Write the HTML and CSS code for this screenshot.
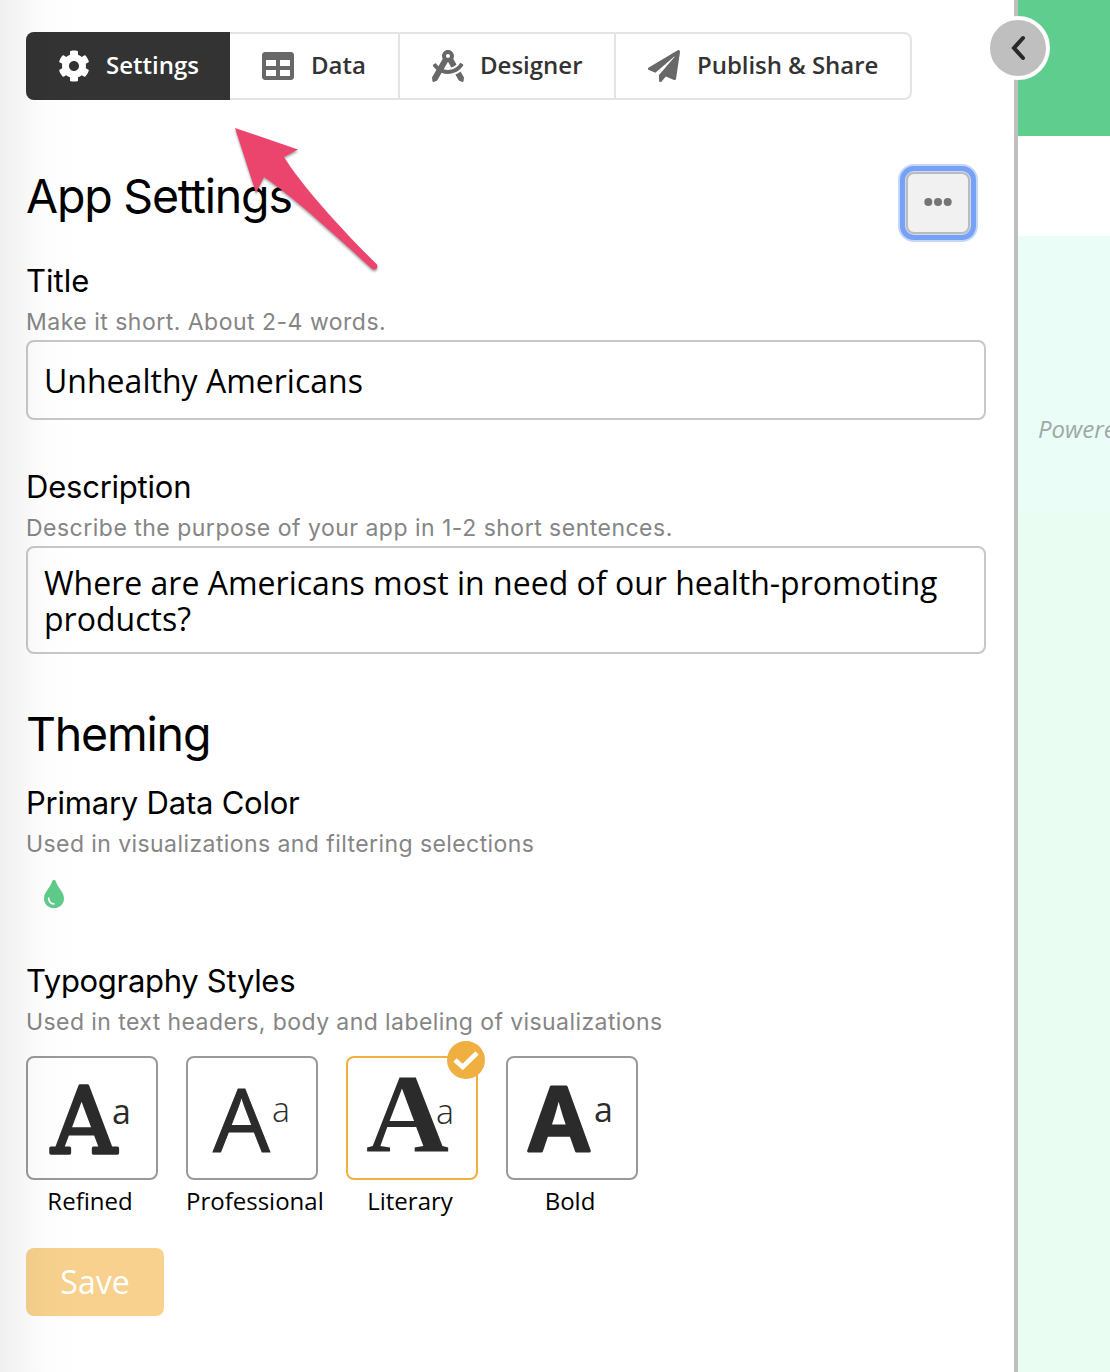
FILE: index.html
```html
<!DOCTYPE html>
<html lang="en">
<head>
<meta charset="utf-8">
<title>App Settings</title>
<link rel="stylesheet" href="styles.css">
</head>
<body>
<div class="app">
  <main class="panel">
    <nav class="tabs">
      <a class="tab tab-settings active">
        <svg class="icon" width="32" height="32" viewBox="0 0 512 512"><path fill="currentColor" d="M487.400 315.700l-42.600-24.600c4.300-23.200 4.300-47 0-70.200l42.600-24.600c4.900-2.800 7.100-8.600 5.500-14-11.100-35.600-30-67.800-54.700-94.600-3.800-4.100-10-5.100-14.800-2.300L380.800 110c-17.900-15.400-38.500-27.300-60.800-35.100V25.800c0-5.600-3.900-10.500-9.400-11.700-36.700-8.200-74.300-7.800-109.200 0-5.500 1.200-9.400 6.100-9.400 11.700V75c-22.200 7.900-42.800 19.800-60.800 35.100L88.700 85.500c-4.900-2.800-11-1.900-14.800 2.300-24.700 26.700-43.600 58.900-54.700 94.600-1.700 5.400.6 11.200 5.500 14L67.300 221c-4.300 23.200-4.300 47 0 70.200l-42.600 24.600c-4.900 2.800-7.100 8.600-5.500 14 11.100 35.600 30 67.800 54.700 94.600 3.800 4.100 10 5.100 14.800 2.300l42.600-24.600c17.900 15.400 38.500 27.300 60.800 35.100v49.200c0 5.600 3.900 10.500 9.400 11.700 36.700 8.200 74.300 7.800 109.200 0 5.500-1.200 9.400-6.100 9.400-11.700v-49.200c22.200-7.900 42.800-19.800 60.800-35.100l42.600 24.600c4.900 2.800 11 1.900 14.800-2.300 24.700-26.700 43.600-58.900 54.700-94.600 1.500-5.500-.7-11.300-5.600-14.100zM256 336c-44.100 0-80-35.900-80-80s35.900-80 80-80 80 35.900 80 80-35.900 80-80 80z"/></svg>
        <span>Settings</span>
      </a>
      <a class="tab tab-data">
        <svg class="icon" width="32" height="32" viewBox="0 0 512 512"><path fill="currentColor" d="M464 32H48C21.500 32 0 53.500 0 80v352c0 26.500 21.500 48 48 48h416c26.500 0 48-21.500 48-48V80c0-26.500-21.500-48-48-48zM224 416H64v-96h160v96zm0-160H64v-96h160v96zm224 160H288v-96h160v96zm0-160H288v-96h160v96z"/></svg>
        <span>Data</span>
      </a>
      <a class="tab tab-designer">
        <svg class="icon" width="32" height="32" viewBox="0 0 512 512"><path fill="currentColor" d="M457.010 344.420c-25.050 20.330-52.630 37.180-82.540 49.050l54.380 94.190 53.950 23.040c9.810 4.190 20.890-2.210 22.170-12.800l7.020-58.250-54.980-95.230zm42.490-94.560c4.860-7.670 1.890-17.990-6.050-22.390l-28.070-15.570c-7.480-4.150-16.610-1.460-21.260 5.720C403.010 281.150 332.250 320 256 320c-23.930 0-47.230-4.250-69.410-11.530l67.360-116.680c.7.020 1.340.21 2.040.21s1.350-.19 2.040-.21l51.090 88.500c31.230-8.960 59.560-25.750 82.610-48.920l-51.790-89.710C347.390 128.030 352 112.630 352 96c0-53.020-42.980-96-96-96s-96 42.980-96 96c0 16.630 4.610 32.030 12.050 45.660l-68.300 118.310c-12.550-11.610-23.960-24.590-33.680-39-4.790-7.100-13.970-9.620-21.380-5.330l-27.750 16.070c-7.850 4.540-10.630 14.900-5.640 22.470 15.570 23.640 34.690 44.210 55.980 62.020L0 439.660l7.020 58.250c1.280 10.590 12.360 16.990 22.170 12.800l53.950-23.040 70.800-122.630C186.130 377.280 220.620 384 256 384c99.050 0 190.880-51.010 243.500-134.140zM256 64c17.670 0 32 14.330 32 32s-14.330 32-32 32-32-14.330-32-32 14.330-32 32-32z"/></svg>
        <span>Designer</span>
      </a>
      <a class="tab tab-publish">
        <svg class="icon" width="32" height="32" viewBox="0 0 512 512"><path fill="currentColor" d="M511.600 36.900L449 461.900c-3 17-18 22-32 17l-132-54-67 79c-15 16-42 7-42-16v-88L424 113c5-6-3-12-8-7L118 364 14 321c-18-8-19-32-2-42L476 4c18-10 39 6 35.600 32.900z"/></svg>
        <span>Publish &amp; Share</span>
      </a>
    </nav>

    <header class="title-row">
      <h1 class="heading">App Settings</h1>
      <button class="more" aria-label="More">
        <svg width="28" height="8" viewBox="0 0 28 8" fill="#757575"><circle cx="4.300" cy="4" r="4"/><circle cx="14" cy="4" r="4"/><circle cx="23.700" cy="4" r="4"/></svg>
      </button>
    </header>

    <section class="field field-title">
      <h2 class="label label-title">Title</h2>
      <p class="hint hint-title">Make it short. About 2-4 words.</p>
      <div class="input">Unhealthy Americans</div>
    </section>

    <section class="field field-description">
      <h2 class="label label-description">Description</h2>
      <p class="hint hint-description">Describe the purpose of your app in 1-2 short sentences.</p>
      <div class="input textarea">Where are Americans most in need of our health-promoting products?</div>
    </section>

    <h1 class="heading heading-theming">Theming</h1>

    <section class="field field-color">
      <h2 class="label label-color">Primary Data Color</h2>
      <p class="hint hint-color">Used in visualizations and filtering selections</p>
      <svg class="drop" width="20" height="28" viewBox="0 0 20 28"><path fill="#5ecb8b" d="M10 0c1.100 0 1.700.6 2 1.700C13.800 8 20 12 20 18.400 20 24 15.600 28 10 28S0 24 0 18.400C0 12 6.200 8 8 1.700 8.300.6 8.900 0 10 0z"/><path fill="none" stroke="#fff" stroke-width="1.700" stroke-linecap="round" d="M4.700 18.200c.2 3.500 2.100 5.500 5.300 5.800"/></svg>
    </section>

    <section class="field field-type">
      <h2 class="label label-type">Typography Styles</h2>
      <p class="hint hint-type">Used in text headers, body and labeling of visualizations</p>
      <div class="styles">
        <div class="style">
          <div class="tile">
            <svg width="128" height="120"><text class="glyph refined" x="23.500" y="94.500" textLength="65" lengthAdjust="spacingAndGlyphs">A</text><text class="small" x="84" y="66">a</text></svg>
          </div>
          <div class="caption">Refined</div>
        </div>
        <div class="style">
          <div class="tile">
            <svg width="128" height="120"><text class="glyph professional" x="25" y="93.500" textLength="57" lengthAdjust="spacingAndGlyphs">A</text><text class="small light" x="84" y="64">a</text></svg>
          </div>
          <div class="caption">Professional</div>
        </div>
        <div class="style selected">
          <div class="tile">
            <svg width="128" height="120"><text class="glyph literary" x="18" y="94" textLength="83" lengthAdjust="spacingAndGlyphs">A</text><text class="small thin" x="88" y="66">a</text></svg>
            <svg class="check" width="38" height="38" viewBox="0 0 38 38"><circle cx="19" cy="19" r="19" fill="#f0b041"/><path d="M8 19l7.700 7L30 12" fill="none" stroke="#fff" stroke-width="4.600"/></svg>
          </div>
          <div class="caption">Literary</div>
        </div>
        <div class="style">
          <div class="tile">
            <svg width="128" height="120"><text class="glyph bold" x="18.500" y="92.500" textLength="65" lengthAdjust="spacingAndGlyphs">A</text><text class="small medium" x="86" y="64">a</text></svg>
          </div>
          <div class="caption">Bold</div>
        </div>
      </div>
    </section>

    <button class="save">Save</button>
    <div class="edge-shade"></div>
    <button class="collapse" aria-label="Collapse panel">
      <svg width="14" height="26" viewBox="0 0 14 26"><path d="M12 3L3 13l9 10" fill="none" stroke="#282828" stroke-width="4" stroke-linecap="round" stroke-linejoin="miter"/></svg>
    </button>
    <svg class="pointer" width="160" height="156" viewBox="0 0 160 156"><path fill="#ec456d" d="M5 4L68 25.500 54 33C72 62 112 106 146 139.500 150 143.500 145 148 141 144 107 113 66 75 34 53L26 69z"/></svg>
  </main>
  <aside class="preview">
    <div class="banner"></div>
    <div class="preview-body"><em class="powered">Powered by</em></div>
  </aside>
</div>
</body>
</html>
```
FILE: styles.css
```css
* { box-sizing: border-box; }
body { margin: 0; background: #fff; color: #000; font-family: "Open Sans", sans-serif; }
h1, h2, p { margin: 0; font-weight: 400; }
button { font: inherit; padding: 0; border: 0; }
svg { display: block; flex: none; }

.app { display: flex; height: 1372px; overflow: hidden; }
.panel { position: relative; z-index: 1; flex: none; width: 1018px; padding: 32px 28px 0 26px; border-right: 4px solid #bfbfbf; display: flex; flex-direction: column; }

.tabs { display: flex; width: 886px; height: 68px; flex: none; border: 2px solid #e4e4e4; border-left: 0; border-radius: 8px; }
.tab { display: flex; align-items: center; gap: 17px; padding-left: 32px; border-right: 2px solid #e4e4e4; color: #333; font-size: 24px; font-weight: 600; white-space: nowrap; }
.tab .icon { color: #686868; }
.tab span { padding-bottom: 4px; }
.tab-settings { width: 204px; margin: -2px 0; gap: 16px; }
.tab-data { width: 170px; }
.tab-designer { width: 216px; gap: 16px; }
.tab-publish { flex: 1; border-right: 0; letter-spacing: -.05px; }
.tab.active { background: #333; color: #fff; border: 0; border-radius: 8px 0 0 8px; }
.tab.active .icon { color: #fff; }

.heading { font-family: Inter, sans-serif; font-size: 46.5px; line-height: 56px; letter-spacing: -1.2px; }
.title-row { display: flex; justify-content: space-between; margin-top: 72px; height: 62px; padding-right: 16px; }
.title-row .heading { margin-top: -4px; }
.more { display: flex; align-items: center; justify-content: center; width: 64px; height: 62px; background: #f1f1f1; border: 2px solid #bbb; border-radius: 8px; box-shadow: 0 0 0 1px #cbdcfb, 0 0 0 8px #c4d7fa; outline: 5px solid #76a1f4; outline-offset: 1px; }
.more svg { margin-bottom: 2px; }

.label { font-family: Inter, sans-serif; font-size: 31px; line-height: 38px; margin-bottom: 4px; white-space: nowrap; letter-spacing: -.22px; }
.label-title { letter-spacing: 0; }
.label-type { letter-spacing: -.3px; }
.hint { font-family: Inter, sans-serif; font-size: 23px; line-height: 36px; color: #858585; white-space: nowrap; letter-spacing: .49px; }
.hint-color, .hint-type { letter-spacing: .42px; }
.field-title { margin-top: 28px; }
.field-description { margin-top: 48px; }
.input { height: 80px; padding: 1px 14px 0 16px; border: 2px solid #c8c8c8; border-radius: 8px; font-size: 32px; line-height: 76px; letter-spacing: .01px; }
.textarea { height: 108px; padding-top: 17px; line-height: 36px; }
.heading-theming { margin-top: 52px; }
.field-color { margin-top: 22px; }
.drop { margin: 18px 0 0 18px; }
.field-type { margin-top: 54px; }

.styles { display: flex; gap: 28px; margin-top: 16px; }
.style { width: 132px; }
.tile { position: relative; height: 124px; border: 2px solid #999; border-radius: 8px; }
.selected .tile { border-color: #f0b041; }
.check { position: absolute; left: 99px; top: -17px; }
.caption { width: 128px; font-size: 24px; line-height: 36px; margin-top: 3px; text-align: center; white-space: nowrap; }
.glyph { fill: #2b2b2b; }
.refined { font: 400 92px "DejaVu Serif", serif; stroke: #2b2b2b; stroke-width: 3.5px; stroke-linejoin: round; }
.professional { font: 400 88px "Open Sans", sans-serif; stroke: #2b2b2b; stroke-width: 1px; }
.literary { font: 700 112px "Liberation Serif", serif; }
.bold { font: 600 88px Inter, sans-serif; stroke: #2b2b2b; stroke-width: 3px; stroke-linejoin: round; }
.small { font: 400 34px "Open Sans", sans-serif; fill: #2b2b2b; }
.light, .thin { font-weight: 300; }
.medium { font-weight: 500; }

.save { width: 138px; height: 68px; margin-top: 29px; padding-bottom: 1px; background: #f7d18d; color: #fff; border-radius: 8px; font-size: 32px; font-weight: 400; }
.edge-shade { position: absolute; left: 0; top: 0; width: 80px; height: 100%; background: linear-gradient(90deg, rgba(0,0,0,.06), rgba(0,0,0,.018) 45%, rgba(0,0,0,.008) 60%, transparent); pointer-events: none; }
.collapse { position: absolute; left: 986px; top: 16px; width: 64px; height: 64px; display: flex; align-items: center; justify-content: center; border: 4px solid #fff; border-radius: 50%; background: #bfbfbf; }
.pointer { position: absolute; left: 230px; top: 124px; filter: drop-shadow(0 2px 1px rgba(0,0,0,.35)); }

.preview { flex: 1; min-width: 0; overflow: hidden; }
.banner { height: 136px; background: #5fcd8d; }
.preview-body { margin-top: 100px; height: 1136px; padding: 176px 0 0 20px; background: linear-gradient(#ebfdf7 0 276px, #e9fdf3 278px); }
.powered { font-size: 24px; line-height: 34px; color: #9faaa5; white-space: nowrap; }
```
